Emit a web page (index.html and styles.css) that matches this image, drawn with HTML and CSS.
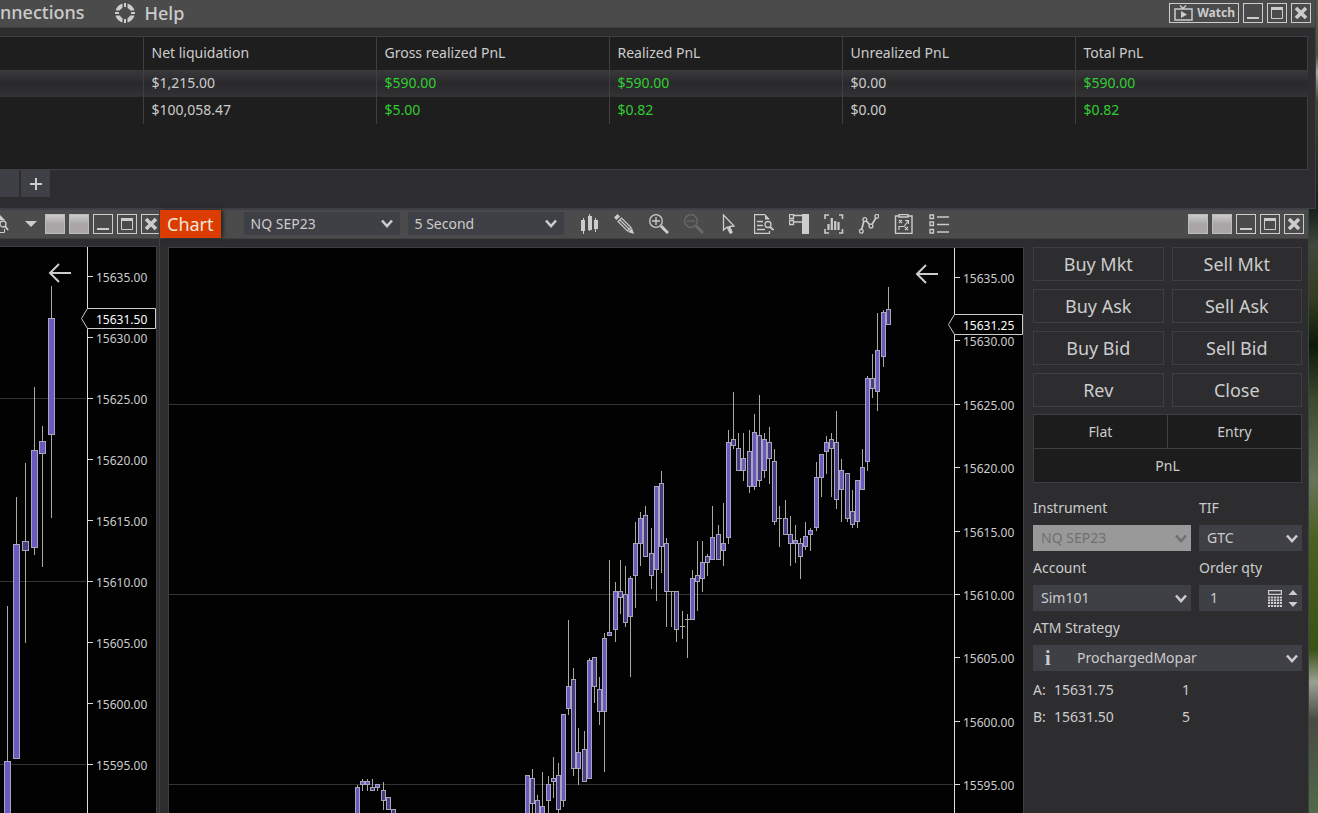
FILE: index.html
```
<!DOCTYPE html>
<html lang="en">
<head>
    <meta charset="UTF-8">
    <meta name="viewport" content="width=device-width, initial-scale=1.0">
    <title>Control Center</title>
    <link rel="stylesheet" href="styles.css">
</head>
<body>
    <!-- shared icons -->
    <svg class="sprite" width="0" height="0">
        <symbol id="chevron" viewBox="0 0 12 9"><path d="M1 1.5 L6 7 L11 1.5" fill="none" stroke="currentColor" stroke-width="2.6"/></symbol>
        <symbol id="min" viewBox="0 0 18 18"><path d="M3 14 H15" stroke="currentColor" stroke-width="2"/></symbol>
        <symbol id="max" viewBox="0 0 18 18"><path d="M3.5 4 V14.5 H14.5 V4" fill="none" stroke="currentColor"/><path d="M3 4.5 H15" stroke="currentColor" stroke-width="3"/></symbol>
        <symbol id="close" viewBox="0 0 18 18"><path d="M4 4 L14 14 M14 4 L4 14" stroke="currentColor" stroke-width="3.6"/></symbol>
    </svg>

    <section class="control-center">
        <header class="menu-bar">
            <nav class="menu">
                <a href="#">nnections</a>
                <a href="#" class="help">
                    <svg width="20" height="20" viewBox="0 0 20 20"><circle cx="10" cy="10" r="7.8" fill="none" stroke="currentColor" stroke-width="4"/><path d="M10 0 V5 M10 15 V20 M0 10 H5 M15 10 H20" stroke="#4b4b4b" stroke-width="5"/><path d="M10 0 V4 M10 16 V20 M0 10 H4 M16 10 H20" stroke="currentColor" stroke-width="2"/></svg>
                    Help
                </a>
            </nav>
            <div class="window-buttons">
                <button class="watch">
                    <svg width="19" height="16" viewBox="0 0 19 16"><path d="M1 4 H18 V15 H1 Z M6 0.500 L9 3.500 L12 0.500" fill="none" stroke="currentColor" stroke-width="1.5"/><path d="M7 6 L13 9.500 L7 13 Z" fill="currentColor"/></svg>
                    Watch
                </button>
                <button class="win" aria-label="Minimize"><svg><use href="#min"/></svg></button>
                <button class="win" aria-label="Maximize"><svg><use href="#max"/></svg></button>
                <button class="win" aria-label="Close"><svg><use href="#close"/></svg></button>
            </div>
        </header>

        <div class="accounts">
            <table>
                <thead>
                    <tr><th class="first"></th><th>Net liquidation</th><th>Gross realized PnL</th><th>Realized PnL</th><th>Unrealized PnL</th><th>Total PnL</th></tr>
                </thead>
                <tbody>
                    <tr class="selected"><td></td><td>$1,215.00</td><td class="gain">$590.00</td><td class="gain">$590.00</td><td>$0.00</td><td class="gain">$590.00</td></tr>
                    <tr><td></td><td>$100,058.47</td><td class="gain">$5.00</td><td class="gain">$0.82</td><td>$0.00</td><td class="gain">$0.82</td></tr>
                </tbody>
            </table>
        </div>

        <div class="tabs">
            <button class="tab" aria-label="Accounts"></button>
            <button class="tab add" aria-label="Add tab"><svg width="14" height="14" viewBox="0 0 14 14"><path d="M7 1 V13 M1 7 H13" stroke="currentColor" stroke-width="2"/></svg></button>
        </div>
    </section>

    <main class="workspace">
        <section class="window window-left">
            <header class="title-bar">
                <svg class="tool-cut" width="9" height="20" viewBox="0 0 9 20"><path d="M0 1 L5 6 H0 Z" fill="currentColor"/><path d="M0 18.500 H4.500 V15" fill="none" stroke="currentColor"/><circle cx="3" cy="10" r="3" fill="none" stroke="currentColor" stroke-width="1.300"/><path d="M5 12 L8 16" stroke="currentColor" stroke-width="1.800"/></svg>
                <svg class="caret" width="12" height="6" viewBox="0 0 12 6"><path d="M0 0 H12 L6 6 Z" fill="currentColor"/></svg>
                <div class="window-buttons">
                    <button class="link" aria-label="Instrument link"></button>
                    <button class="link" aria-label="Interval link"></button>
                    <button class="win" aria-label="Minimize"><svg><use href="#min"/></svg></button>
                    <button class="win" aria-label="Maximize"><svg><use href="#max"/></svg></button>
                    <button class="win" aria-label="Close"><svg><use href="#close"/></svg></button>
                </div>
            </header>
            <div class="chart"><svg id="chart-left"></svg></div>
        </section>

        <section class="window window-right">
            <header class="title-bar">
                <h1 class="chart-title">Chart</h1>
                <div class="select instrument">
                    <select aria-label="Instrument"><option>NQ SEP23</option></select>
                    <svg><use href="#chevron"/></svg>
                </div>
                <div class="select interval">
                    <select aria-label="Interval"><option>5 Second</option></select>
                    <svg><use href="#chevron"/></svg>
                </div>
                <div class="tools">
                    <button aria-label="Chart style"><svg viewBox="0 0 20 20"><path d="M2 6 H6 V17 H2 Z M9 2 H13 V16 H9 Z M15 6 H19 V15 H15 Z" fill="currentColor"/><path d="M4.500 4 V20 M10.500 0 V17 M16.500 4 V18" stroke="currentColor"/></svg></button>
                    <button aria-label="Drawing tools"><svg viewBox="0 0 20 20"><path d="M0 3.500 L3.500 0 L6 2.500 L2.500 6 Z M20 20 L14 18 L18 14 Z" fill="currentColor"/><path d="M4 7.500 L7.500 4 L17 13.500 L13.500 17 Z M6 6 L15 15" fill="none" stroke="currentColor" stroke-width="1.200"/></svg></button>
                    <button aria-label="Zoom in"><svg viewBox="0 0 20 20"><circle cx="7" cy="7" r="6.300" fill="none" stroke="currentColor" stroke-width="1.300"/><path d="M3 7 H11 M7 3 V11" stroke="currentColor" stroke-width="1.300"/><path d="M12 12 L19 19" stroke="currentColor" stroke-width="3"/></svg></button>
                    <button aria-label="Zoom out" disabled><svg viewBox="0 0 20 20"><circle cx="7" cy="7" r="6.300" fill="none" stroke="currentColor" stroke-width="1.300"/><path d="M3 7 H11" stroke="currentColor" stroke-width="1.300"/><path d="M12 12 L19 19" stroke="currentColor" stroke-width="3"/></svg></button>
                    <button aria-label="Cursor"><svg viewBox="0 0 20 20"><path d="M4.500 1 V16 L8 13 L11 19 L13 18 L10.500 12.500 L15 12 Z" fill="none" stroke="currentColor" stroke-width="1.300"/><path d="M8.500 13 L10.500 12 L13.500 19 L11.500 20 Z" fill="currentColor"/></svg></button>
                    <button aria-label="Data box"><svg viewBox="0 0 20 20"><path d="M11 0.500 H0.500 V19.500 H15.500 V17" fill="none" stroke="currentColor" stroke-width="1.300"/><path d="M11 0 L16 5.500 H11 Z" fill="currentColor"/><path d="M3 7.500 H9 M3 11.500 H9 M3 15.500 H11" stroke="currentColor" stroke-width="1.500"/><circle cx="14" cy="10.500" r="3" fill="none" stroke="currentColor" stroke-width="1.300"/><path d="M16 13 L19.500 16" stroke="currentColor" stroke-width="1.800"/></svg></button>
                    <button aria-label="Chart trader"><svg viewBox="0 0 20 20"><path d="M0.500 0.500 H4.500 V4.500 H0.500 Z M0.500 6.500 H4.500 V10.500 H0.500 Z" fill="none" stroke="currentColor" stroke-width="1.300"/><path d="M5 1.500 H13 M5 8 H13" stroke="currentColor" stroke-width="1.500"/><path d="M13 0 H20 V20 H13 Z" fill="currentColor"/></svg></button>
                    <button aria-label="Market analyzer"><svg viewBox="0 0 20 20"><path d="M1 5 V1 H5 M15 1 H18.500 V5 M1 15 V19 H5 M15 19 H18.500 V15" fill="none" stroke="currentColor" stroke-width="1.600"/><path d="M4.500 10 V16 M7.800 4 V16 M11.200 7 V16 M14.500 8 V16" stroke="currentColor" stroke-width="2.200"/></svg></button>
                    <button aria-label="Indicators"><svg viewBox="0 0 20 20"><path d="M2.500 16 L5.500 5 L12 12 L17.500 3" fill="none" stroke="currentColor" stroke-width="1.700"/><g fill="#4b4b4b" stroke="currentColor" stroke-width="1.300"><circle cx="2.300" cy="17.300" r="1.900"/><circle cx="5.800" cy="5.500" r="1.900"/><circle cx="12" cy="12" r="1.900"/><circle cx="17.800" cy="2.300" r="1.900"/></g></svg></button>
                    <button aria-label="Strategies"><svg viewBox="0 0 20 20"><path d="M5 2 H1.500 V19.500 H18 V2 H14.500 M5 0.500 H14 V3 H5 Z" fill="none" stroke="currentColor" stroke-width="1.400"/><path d="M5 6 L8 9 M8 6 L5 9 M11 13 L14 16 M14 13 L11 16 M5 16 V12.500 H10 L14 7 M11 6.500 H14.500 V10" fill="none" stroke="currentColor" stroke-width="1.200"/></svg></button>
                    <button aria-label="Properties"><svg viewBox="0 0 20 20"><path d="M1 1 H4.500 V4.500 H1 Z M1 8 H4.500 V11.500 H1 Z M1 15.500 H4.500 V19 H1 Z" fill="none" stroke="currentColor" stroke-width="1.300"/><path d="M8 3 H20 M8 10.500 H20 M8 18 H20" stroke="currentColor" stroke-width="1.500"/></svg></button>
                </div>
                <div class="window-buttons">
                    <button class="link" aria-label="Instrument link"></button>
                    <button class="link" aria-label="Interval link"></button>
                    <button class="win" aria-label="Minimize"><svg><use href="#min"/></svg></button>
                    <button class="win" aria-label="Maximize"><svg><use href="#max"/></svg></button>
                    <button class="win" aria-label="Close"><svg><use href="#close"/></svg></button>
                </div>
            </header>

            <div class="window-body">
                <div class="chart"><svg id="chart-right"></svg></div>

                <aside class="trader">
                    <div class="order-buttons">
                        <button>Buy Mkt</button><button>Sell Mkt</button>
                        <button>Buy Ask</button><button>Sell Ask</button>
                        <button>Buy Bid</button><button>Sell Bid</button>
                        <button>Rev</button><button>Close</button>
                    </div>
                    <div class="position">
                        <div>Flat</div><div>Entry</div>
                        <div class="pnl">PnL</div>
                    </div>
                    <div class="fields">
                        <div class="field">
                            <label for="instrument">Instrument</label>
                            <div class="select disabled">
                                <select id="instrument" disabled><option>NQ SEP23</option></select>
                                <svg><use href="#chevron"/></svg>
                            </div>
                        </div>
                        <div class="field">
                            <label for="tif">TIF</label>
                            <div class="select">
                                <select id="tif"><option>GTC</option></select>
                                <svg><use href="#chevron"/></svg>
                            </div>
                        </div>
                        <div class="field">
                            <label for="account">Account</label>
                            <div class="select">
                                <select id="account"><option>Sim101</option></select>
                                <svg><use href="#chevron"/></svg>
                            </div>
                        </div>
                        <div class="field">
                            <label for="qty">Order qty</label>
                            <div class="qty">
                                <input id="qty" type="text" value="1">
                                <svg width="14" height="17" viewBox="0 0 14 17"><path d="M0.600 0.600 H13.400 V4.400 H0.600 Z" fill="none" stroke="currentColor" stroke-width="1.200"/><path d="M0 7.500 H14 M0 10.300 H14 M0 13.100 H14 M0 15.900 H14" stroke="currentColor" stroke-width="2" stroke-dasharray="2.200 0.750"/></svg>
                                <svg width="10" height="17" viewBox="0 0 10 17"><path d="M0.500 5 L5 0 L9.500 5 Z M0.500 12 L5 17 L9.500 12 Z" fill="currentColor"/></svg>
                            </div>
                        </div>
                        <div class="field wide">
                            <label for="atm">ATM Strategy</label>
                            <div class="select atm">
                                <span class="info">i</span>
                                <select id="atm"><option>ProchargedMopar</option></select>
                                <svg><use href="#chevron"/></svg>
                            </div>
                        </div>
                    </div>
                    <div class="quotes">
                        <span>A:</span><span>15631.75</span><span>1</span>
                        <span>B:</span><span>15631.50</span><span>5</span>
                    </div>
                </aside>
            </div>
        </section>
    </main>

    <script src="chart.js"></script>
</body>
</html>
```
FILE: styles.css
```
* {
    box-sizing: border-box;
}

body {
    margin: 0;
    height: 100vh;
    overflow: hidden;
    display: flex;
    flex-direction: column;
    font-family: "Noto Sans", "Open Sans", sans-serif;
    font-size: 14px;
    line-height: 20px;
    color: #cccccc;
    background: linear-gradient(#5c5d46 0, #4a5038 55px, #a5a89a 72px, #3d4a33 100px, #2b3522 150px, #16201a 208px, #40483a 245px, #333d1f 300px, #0c1a0a 345px, #3c4a30 400px, #66745a 480px, #4a6020 540px, #3a5216 650px, #9aa092 682px, #4a4a42 720px, #4f6b4a 813px);
}

button, select, input {
    font: inherit;
    color: inherit;
    border: none;
    border-radius: 0;
    padding: 0;
    background: none;
}

.sprite {
    position: absolute;
}

/* control center */

.control-center {
    margin-right: 2px;
    height: 209px;
    flex: none;
    background: #2d2d30;
    border-right: 1px solid #3f3f46;
    border-bottom: 1px solid #3f3f46;
}

.menu-bar {
    display: flex;
    justify-content: space-between;
    height: 28px;
    background: #4b4b4b;
    border-bottom: 1px solid #3f3f42;
}

.menu {
    display: flex;
    gap: 30px;
    font-size: 18px;
    font-weight: 500;
    line-height: 24px;
}

.menu a {
    height: 26px;
    color: #cccccc;
    text-decoration: none;
}

.help {
    display: flex;
    align-items: center;
    gap: 10px;
}

.window-buttons {
    display: flex;
    flex: none;
    gap: 4px;
}

.menu-bar .window-buttons {
    padding: 3px 4px 0 0;
}

.win {
    width: 20px;
    height: 20px;
    border: 1px solid #cccccc;
}

.win svg {
    display: block;
    width: 18px;
    height: 18px;
}

.link {
    width: 20px;
    height: 20px;
    background: linear-gradient(#cccccc, #aaa6a8 50%);
    border: 1px solid #bdbbbc;
}

.watch {
    display: flex;
    align-items: center;
    gap: 4px;
    height: 20px;
    padding: 0 3px 0 4px;
    border: 1px solid #cccccc;
    font-size: 12px;
    font-weight: bold;
}

.accounts {
    height: 134px;
    margin: 8px 7px 0 0;
    background: #1e1e1e;
    border: 1px solid #3f3f42;
    border-left: none;
}

.accounts table {
    width: 100%;
    table-layout: fixed;
    border-collapse: collapse;
}

.accounts th,
.accounts td {
    width: 233px;
    height: 27px;
    padding: 0 8px 1px;
    text-align: left;
    font-weight: normal;
    border-left: 1px solid #3f3f42;
}

.accounts th {
    height: 33px;
}

.accounts .first {
    width: 143px;
}

.accounts tr > :first-child {
    border-left: none;
}

.accounts .selected {
    background: linear-gradient(#3a3a3c, #29292b 50%, #333336);
}

.accounts .gain {
    color: #32cd32;
}

.tabs {
    display: flex;
    gap: 2px;
}

.tab {
    width: 19px;
    height: 27px;
    background: #3f3f46;
}

.add {
    width: 29px;
    display: flex;
    align-items: center;
    justify-content: center;
}

/* chart windows */

.workspace {
    flex: 1;
    min-height: 0;
    display: flex;
    margin-right: 9px;
}

.window {
    display: flex;
    flex-direction: column;
    background: #2d2d30;
}

.window-left {
    width: 159px;
    flex: none;
    overflow: hidden;
}

.window-right {
    flex: 1;
    min-width: 0;
    border-left: 1px solid #3f3f46;
    border-right: 1px solid #3f3f46;
}

.title-bar {
    display: flex;
    align-items: center;
    flex: none;
    height: 30px;
    padding-bottom: 1px;
    background: #4b4b4b;
    border-top: 1px solid #3f3f46;
    border-bottom: 1px solid #3f3f42;
}

.title-bar > svg {
    flex: none;
}

.caret {
    margin: 0 8px 0 16px;
}

.chart-title {
    align-self: flex-start;
    margin: 0 23px 0 0;
    padding: 0 7px;
    font-size: 18px;
    font-weight: normal;
    line-height: 28px;
    color: #f0e6dc;
    background: #dc3c00;
    box-shadow: 2px 0 4px #222222;
}

.select {
    display: grid;
    grid-template-columns: minmax(0, 1fr);
    align-items: center;
    background: #3f3f46;
}

.select > * {
    grid-area: 1 / 1;
}

.select select {
    width: 100%;
    height: 26px;
    padding: 0 24px 0 8px;
    appearance: none;
    outline: none;
}

.select svg {
    justify-self: end;
    width: 12px;
    height: 9px;
    margin-right: 4px;
    pointer-events: none;
}

.title-bar .select {
    width: 156px;
    margin-right: 8px;
}

.title-bar .select select {
    height: 23px;
    padding-left: 7px;
}

.title-bar .select svg {
    margin-right: 7px;
}

.tools {
    display: flex;
    gap: 15px;
    margin-left: 7px;
}

.tools button,
.tools svg {
    display: block;
    width: 20px;
    height: 20px;
}

.tools button:disabled {
    color: #6a6a6a;
}

.window-right .window-buttons {
    margin-left: auto;
    padding-right: 4px;
}

.window-body {
    flex: 1;
    min-height: 0;
    display: flex;
    padding: 8px 6px 0 8px;
    gap: 9px;
}

.chart {
    flex: 1;
    min-width: 0;
    min-height: 0;
    background: #020202;
    border: 1px solid #3f3f42;
    border-bottom: none;
}

.window-left .chart {
    margin: 7px 2px 0 0;
    border-left: none;
}

.chart svg {
    display: block;
    width: 100%;
    height: 100%;
    font-size: 12px;
    fill: #cccccc;
}

.grid {
    stroke: #333333;
}

.axis {
    fill: none;
    stroke: #dddddd;
}

.wick {
    stroke: #a9a99f;
}

.body {
    stroke: #a9a5bd;
    fill: #6a5abf;
}

.body.down {
    fill: #483d80;
}

.tag {
    fill: #020202;
    stroke: #cccccc;
}

.tag-text {
    fill: #ffffff;
}

.arrow {
    fill: none;
    stroke: #cccccc;
    stroke-width: 2;
}

/* order entry */

.trader {
    width: 269px;
    flex: none;
}

.order-buttons {
    display: grid;
    grid-template-columns: 1fr 1fr;
    gap: 8px;
}

.order-buttons button {
    height: 34px;
    font-size: 18px;
    border: 1px solid #3f3f42;
}

.position {
    display: grid;
    grid-template-columns: 1fr 1fr;
    gap: 1px;
    margin-top: 7px;
    border: 1px solid #3f3f42;
    background: #3f3f42;
    text-align: center;
    line-height: 33px;
}

.position div {
    background: #1c1c1c;
}

.position .pnl {
    grid-column: span 2;
}

.fields {
    display: grid;
    grid-template-columns: 158px minmax(0, 1fr);
    gap: 7px 8px;
    margin-top: 15px;
}

.field label {
    display: block;
    margin-bottom: 7px;
}

.wide {
    grid-column: span 2;
}

.disabled {
    background: #999999;
    color: #707070;
}

.disabled select {
    opacity: 1;
}

.qty {
    display: flex;
    align-items: center;
    gap: 6px;
    height: 26px;
    padding: 0 4px 0 11px;
    background: #3f3f46;
}

.qty input {
    flex: 1;
    min-width: 0;
    outline: none;
}

.info {
    padding-left: 12px;
    font-family: "Liberation Serif", serif;
    font-size: 20px;
    font-weight: bold;
}

.select.atm select {
    padding-left: 44px;
}

.quotes {
    display: grid;
    grid-template-columns: 21px 1fr 120px;
    row-gap: 7px;
    margin-top: 9px;
}
```
FILE: chart.js
```
// candle: [x, high, open/close top, open/close bottom, low, down]
var leftCandles = [
    [7, 606, 761, 830, 830, 0], [16, 497, 544, 758, 758, 0], [25, 463, 541, 550, 643, 1],
    [34, 387, 450, 547, 555, 0], [42, 426, 441, 453, 567, 0], [51, 286, 318, 434, 518, 0]
];

var rightCandles = [
    [357, 785, 787, 830, 830, 0], [362, 779, 781, 784, 791, 0], [367, 779, 781, 784, 791, 0],
    [372, 779, 787, 790, 790, 1], [377, 784, 784, 787, 791, 0], [383, 782, 790, 800, 810, 1],
    [388, 797, 797, 809, 809, 1], [393, 809, 809, 830, 830, 1],
    [527, 775, 775, 830, 830, 0], [532, 769, 778, 803, 830, 1], [537, 795, 800, 830, 830, 1],
    [542, 772, 806, 830, 830, 0], [548, 776, 784, 800, 813, 0], [553, 757, 778, 781, 798, 1],
    [558, 763, 775, 809, 813, 1], [563, 714, 714, 800, 807, 0], [568, 620, 686, 708, 715, 0],
    [573, 668, 679, 768, 776, 1], [578, 728, 752, 768, 785, 0], [584, 731, 749, 781, 781, 1],
    [589, 658, 660, 778, 778, 0], [594, 657, 657, 686, 703, 1], [599, 677, 689, 711, 725, 1],
    [604, 633, 638, 711, 772, 0], [609, 560, 632, 635, 635, 0], [615, 582, 591, 629, 642, 0],
    [620, 560, 591, 597, 614, 1], [625, 566, 594, 622, 627, 1], [630, 576, 578, 616, 677, 0],
    [635, 522, 543, 575, 608, 0], [640, 512, 518, 543, 566, 0], [645, 506, 515, 556, 556, 1],
    [651, 528, 553, 575, 589, 1], [656, 486, 486, 569, 601, 0], [661, 471, 483, 546, 573, 1],
    [666, 538, 543, 591, 627, 1], [671, 591, 591, 591, 627, 0], [676, 591, 591, 629, 642, 1],
    [682, 611, 626, 626, 639, 0], [687, 614, 619, 619, 658, 0], [692, 570, 578, 619, 619, 0],
    [697, 541, 575, 581, 611, 1], [702, 541, 562, 578, 592, 0], [707, 554, 556, 562, 576, 1],
    [712, 506, 537, 559, 559, 0], [718, 525, 534, 559, 559, 1], [723, 503, 543, 550, 566, 0],
    [728, 430, 442, 537, 544, 0], [733, 392, 439, 445, 449, 1], [738, 433, 448, 470, 470, 1],
    [743, 433, 458, 470, 481, 0], [749, 430, 451, 486, 493, 1], [754, 414, 432, 486, 490, 0],
    [759, 395, 435, 480, 487, 1], [764, 433, 439, 470, 478, 0], [769, 427, 442, 458, 484, 1],
    [774, 449, 461, 521, 525, 1], [779, 506, 518, 518, 547, 0], [785, 500, 518, 534, 534, 1],
    [790, 516, 534, 543, 566, 1], [795, 525, 540, 543, 563, 0], [800, 538, 543, 556, 579, 1],
    [805, 522, 536, 546, 550, 0], [810, 528, 530, 534, 551, 0], [816, 462, 477, 527, 531, 0],
    [821, 454, 454, 477, 497, 0], [826, 436, 442, 451, 474, 0], [831, 433, 439, 448, 497, 1],
    [836, 411, 442, 499, 509, 1], [841, 459, 470, 489, 522, 0], [847, 473, 473, 518, 522, 1],
    [852, 490, 511, 524, 528, 1], [857, 480, 480, 521, 528, 0], [862, 449, 467, 489, 489, 0],
    [867, 376, 378, 461, 471, 0], [872, 354, 378, 388, 398, 1], [877, 313, 350, 391, 411, 0],
    [883, 310, 312, 356, 367, 0], [888, 287, 309, 324, 324, 1]
];

function drawChart(id, opt) {
    var svg = document.getElementById(id);
    var axis = svg.clientWidth - 69;
    var dx = axis - opt.axis;
    var out = '<g transform="translate(0,' + -opt.top + ')">';
    var i, y;

    for (i = 0; i < 9; i++) {
        y = Math.round(opt.first + i * opt.step) + 0.5;
        if (i % 3 == 2) {
            out += '<path class="grid" d="M0 ' + y + ' H' + (axis - 1) + '"/>';
        }
    }

    out += '<g transform="translate(' + dx + ',0)">';
    opt.candles.forEach(function (c) {
        var x = c[0] + 0.5;
        out += '<path class="wick" d="M' + x + ' ' + c[1] + ' V' + c[4] + '"/>';
        if (c[2] == c[3]) {
            out += '<path class="wick" d="M' + (x - 2.5) + ' ' + (c[2] + 0.5) + ' h5"/>';
        } else {
            out += '<rect class="body' + (c[5] ? ' down' : '') + '" x="' + (x - opt.half) + '" y="' + (c[2] + 0.5) +
                '" width="' + opt.half * 2 + '" height="' + (c[3] - c[2]) + '"/>';
        }
    });
    out += '</g>';

    // price axis
    out += '<path class="axis" d="M' + (axis + 0.5) + ' 0 V2000"/>';
    for (i = 0; i < 9; i++) {
        y = Math.round(opt.first + i * opt.step) + 0.5;
        out += '<path class="axis" d="M' + axis + ' ' + y + ' h6"/>';
        out += '<text x="' + (axis + 9) + '" y="' + (y + 5) + '">' + (15635 - i * 5).toFixed(2) + '</text>';
    }

    // last price
    y = opt.last + 0.5;
    out += '<path class="tag" d="M' + (axis + 0.5) + ' ' + (y - 10) + ' H' + (axis + 68.5) + ' v20 H' + (axis + 0.5) + ' l-6 -10 z"/>';
    out += '<text class="tag-text" x="' + (axis + 9) + '" y="' + (y + 5) + '">' + opt.price + '</text>';

    y = opt.arrow;
    out += '<path class="arrow" d="M' + (axis - 16) + ' ' + y + ' h-21 m9 -9 l-9 9 l9 9"/>';
    svg.innerHTML = out + '</g>';
}

function drawAll() {
    drawChart('chart-left', { axis: 87, top: 247, first: 276, step: 61, last: 318, price: '15631.50', arrow: 273, half: 3, candles: leftCandles });
    drawChart('chart-right', { axis: 954, top: 248, first: 277, step: 63.4, last: 324, price: '15631.25', arrow: 274, half: 2, candles: rightCandles });
}

drawAll();
window.addEventListener('resize', drawAll);
```
